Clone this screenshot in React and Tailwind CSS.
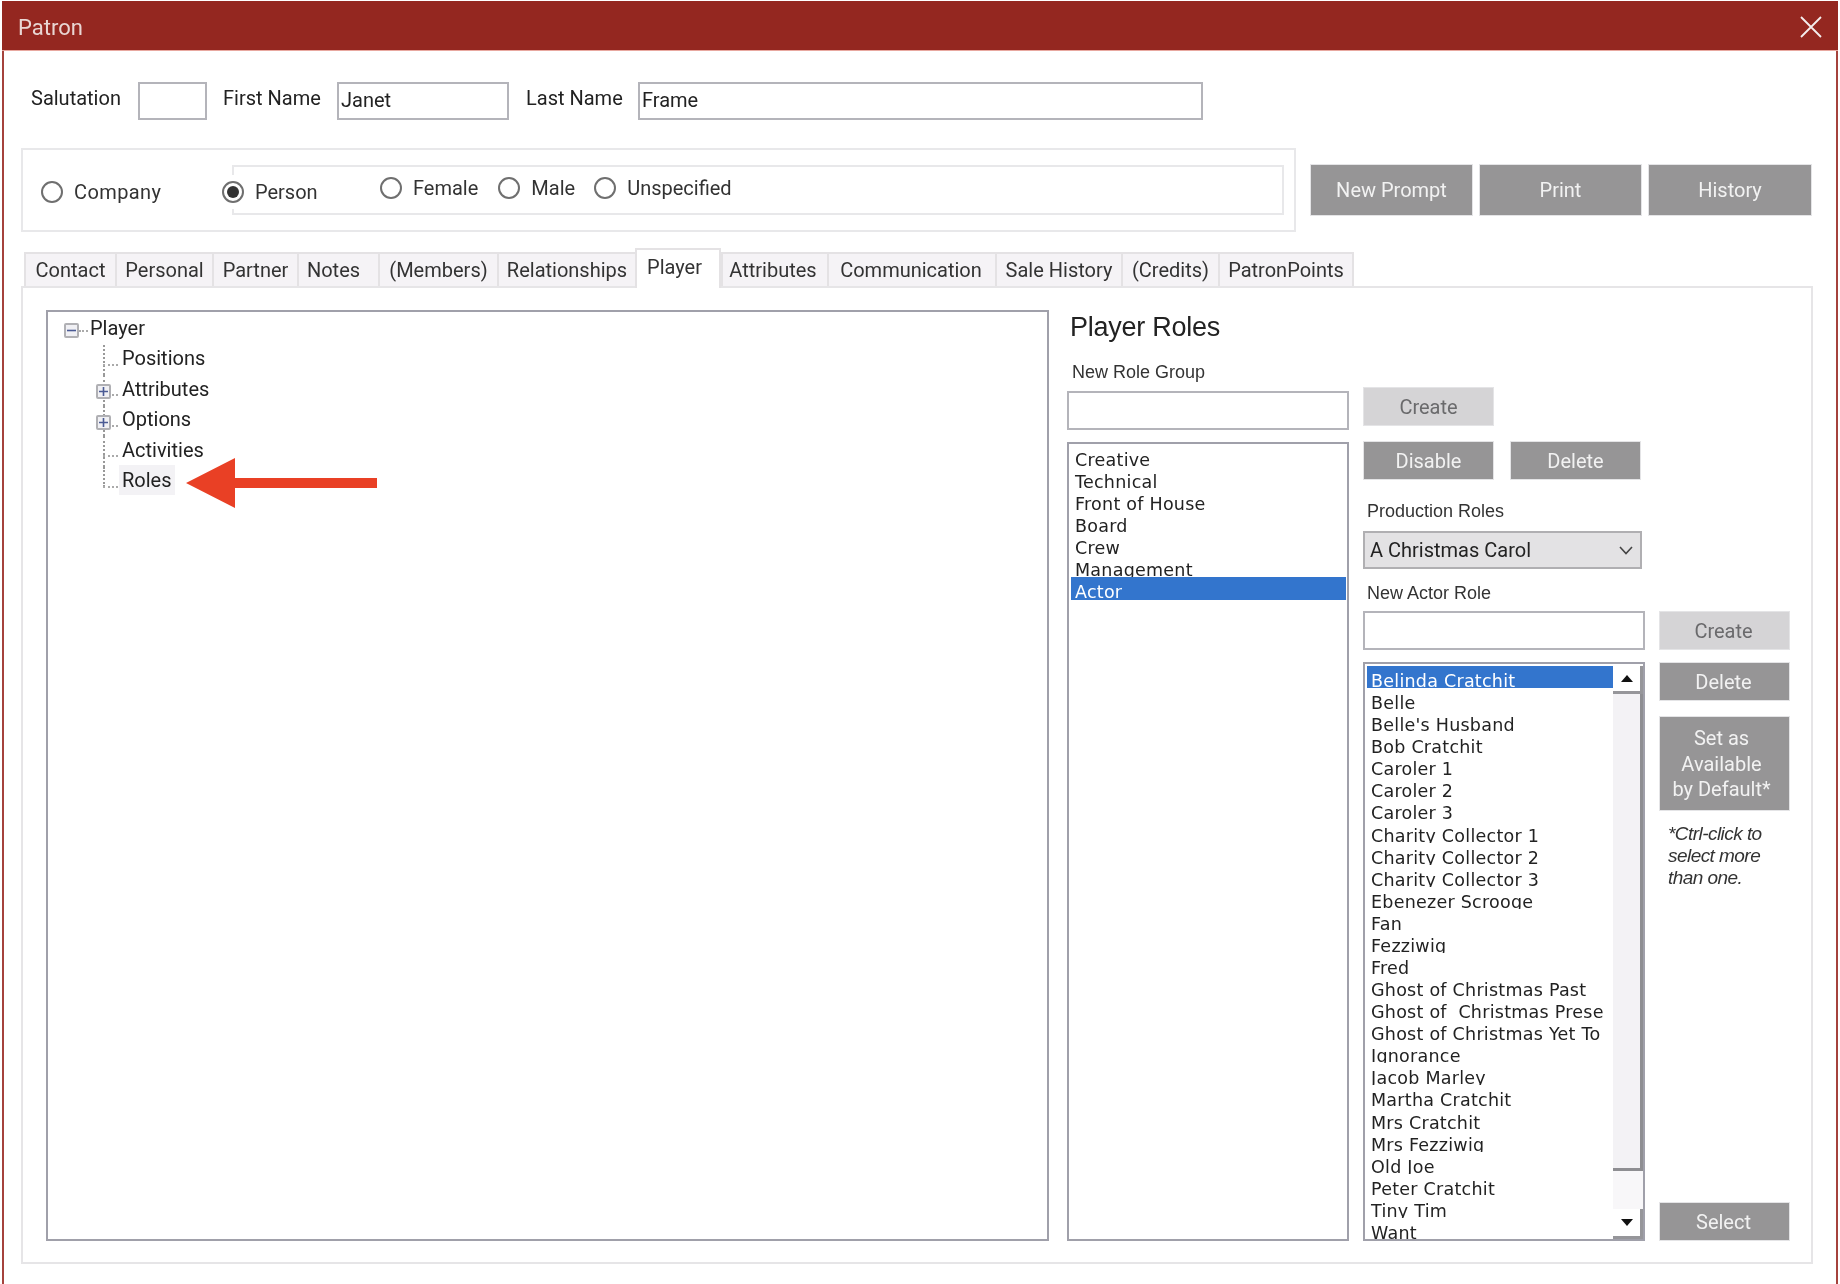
const FONT = "font-['Roboto',sans-serif]";
const LIST = "font-['DejaVu_Sans',sans-serif]";

function Btn({ className = "", children, light }) {
  return (
    <div className={`flex items-center justify-center border border-[#e4e4e6] text-[20px] ${light ? "bg-[#d5d4d6] text-[#6a6a6c]" : "bg-[#969596] text-[#f2f2f2]"} ${className}`}>
      {children}
    </div>
  );
}

function Input({ className = "", value }) {
  return (
    <div className={`flex items-center border-2 border-[#b4b4ba] bg-white pb-[2px] pl-[2px] text-[20px] text-[#222] ${className}`}>
      {value}
    </div>
  );
}

function Radio({ checked, className = "", label }) {
  return (
    <div className={`flex items-center gap-[11px] text-[20px] text-[#333] ${className}`}>
      <span className="flex h-[22px] w-[22px] items-center justify-center rounded-full border-2 border-[#6f6f6f] bg-white">
        {checked && <span className="h-[12px] w-[12px] rounded-full bg-[#333]" />}
      </span>
      <span>{label}</span>
    </div>
  );
}

const TABS = [
  ["Contact", 91, 0],
  ["Personal", 97, 0],
  ["Partner", 85, 0],
  ["Notes", 81, 10],
  ["(Members)", 119, 0],
  ["Relationships", 138, 0],
  ["Player", 86, 7],
  ["Attributes", 106, 4],
  ["Communication", 168, 2],
  ["Sale History", 126, 0],
  ["(Credits)", 97, 0],
  ["PatronPoints", 136, 0],
];

function Tabs() {
  return (
    <div className="ml-[20px] mt-[16px] flex h-[38px] items-end">
      {TABS.map(([t, w, pr]) =>
        t === "Player" ? (
          <div key={t} style={{ width: w, paddingRight: pr }} className="z-10 -mb-[2px] flex h-[40px] items-start justify-center border-2 border-b-0 border-[#e4e2e4] bg-white pt-[2px] text-[20px] text-[#333]">
            {t}
          </div>
        ) : (
          <div key={t} style={{ width: w, paddingRight: pr }} className="flex h-[34px] items-center justify-center border-2 border-b-0 border-r-0 border-[#e4e2e4] bg-[#f5f3f6] text-[20px] text-[#333] last:border-r-2">
            {t}
          </div>
        )
      )}
    </div>
  );
}

function Expander({ minus, className = "" }) {
  return (
    <span className={`flex h-[15px] w-[15px] items-center justify-center rounded-[2px] border-2 border-[#b0b0b4] bg-[#f0f0f4] ${className}`}>
      <svg width="9" height="9" viewBox="0 0 9 9">
        <path d={minus ? "M0 4.5H9" : "M0 4.5H9M4.5 0V9"} stroke="#4a5a94" strokeWidth="1.6" />
      </svg>
    </span>
  );
}

function TreeRow({ label, expander, highlight, last }) {
  return (
    <div className="relative flex h-[30.5px] items-center pl-[71px]">
      <span className={`absolute left-[55px] top-0 w-0 border-l-2 border-dotted border-[#999] ${last ? "h-[20px]" : "h-full"}`} />
      <span className="absolute left-[55px] top-[19px] w-[15px] border-t-2 border-dotted border-[#aaa]" />
      {expander && <Expander className="absolute left-[48px] top-[9px]" />}
      <span className={`-mt-[3px] flex h-[30px] items-center px-[3px] text-[20px] text-[#222] ${highlight ? "bg-[#f3f2f5]" : ""}`}>{label}</span>
    </div>
  );
}

function Tree() {
  return (
    <div className="relative h-[931px] w-[1003px] border-2 border-[#a0a0aa] bg-white pt-[2px]">
      <div className="relative flex h-[30.5px] items-center pl-[16px]">
        <Expander minus className="mt-[3px]" />
        <span className="mt-[3px] w-[9px] border-t-2 border-dotted border-[#aaa]" />
        <span className="-mt-[3px] ml-[2px] text-[20px] text-[#222]">Player</span>
      </div>
      <TreeRow label="Positions" />
      <TreeRow label="Attributes" expander />
      <TreeRow label="Options" expander />
      <TreeRow label="Activities" />
      <TreeRow label="Roles" highlight last />
      <svg className="absolute left-[138px] top-[146px]" width="194" height="52" viewBox="0 0 194 52">
        <path d="M0 25 L49 0 V20 H191 V30 H49 V50 Z" fill="#e94025" />
      </svg>
    </div>
  );
}

const GROUPS = ["Creative", "Technical", "Front of House", "Board", "Crew", "Management", "Actor"];
const ROLES = [
  "Belinda Cratchit", "Belle", "Belle's Husband", "Bob Cratchit", "Caroler 1", "Caroler 2", "Caroler 3",
  "Charity Collector 1", "Charity Collector 2", "Charity Collector 3", "Ebenezer Scrooge", "Fan", "Fezziwig",
  "Fred", "Ghost of Christmas Past", "Ghost of  Christmas Prese", "Ghost of Christmas Yet To", "Ignorance",
  "Jacob Marley", "Martha Cratchit", "Mrs Cratchit", "Mrs Fezziwig", "Old Joe", "Peter Cratchit", "Tiny Tim", "Want",
];

function ListRow({ label, selected }) {
  return (
    <div className={`h-[22.08px] shrink-0 overflow-hidden whitespace-pre pl-[4px] text-[17.5px] leading-[30px] tracking-[0.25px] ${LIST} ${selected ? "bg-[#3375cd] text-white" : "text-[#222]"}`}>
      {label}
    </div>
  );
}

function Scrollbar() {
  return (
    <div className="flex w-[30px] shrink-0 flex-col bg-white pt-[2px]">
      <div className="flex h-[28px] shrink-0 items-center justify-center border-b-[3px] border-r-[3px] border-[#96969a] bg-white">
        <svg width="12" height="7" viewBox="0 0 12 7"><path d="M6 0L12 7H0Z" fill="#111" /></svg>
      </div>
      <div className="h-[477px] shrink-0 border-b-[3px] border-r-[3px] border-[#8e8e92] bg-[#f3f2f5]" />
      <div className="flex-1 bg-[#f8f7f9]" />
      <div className="flex h-[30px] shrink-0 items-center justify-center border-b-[3px] border-r-[3px] border-[#96969a] bg-white">
        <svg width="12" height="7" viewBox="0 0 12 7"><path d="M6 7L12 0H0Z" fill="#111" /></svg>
      </div>
    </div>
  );
}

function RightPane() {
  return (
    <div className="ml-[18px] flex h-[931px] w-[724px]">
      <div className="flex w-[282px] shrink-0 flex-col">
        <div className="flex h-[34px] items-center pl-[3px] font-['Liberation_Sans',sans-serif] text-[27px] tracking-[-0.25px] text-[#222]">Player Roles</div>
        <div className="mt-[15px] flex h-[26px] items-center pl-[5px] font-['Liberation_Sans',sans-serif] text-[18px] text-[#333]">New Role Group</div>
        <Input className="mt-[6px] h-[39px]" />
        <div className="mt-[12px] flex min-h-0 flex-1 flex-col overflow-hidden border-2 border-[#a0a0aa] bg-white pl-[2px] pr-[1px] pt-[1px]">
          {GROUPS.map((g, i) => (
            <ListRow key={g} label={g} selected={i === 6} />
          ))}
        </div>
      </div>
      <div className="ml-[14px] flex min-w-0 flex-1 flex-col pt-[77px]">
        <Btn light className="h-[39px] w-[131px]">Create</Btn>
        <div className="mt-[15px] flex gap-[16px]">
          <Btn className="h-[39px] w-[131px]">Disable</Btn>
          <Btn className="h-[39px] w-[131px]">Delete</Btn>
        </div>
        <div className="mt-[20px] flex h-[22px] items-center pl-[4px] font-['Liberation_Sans',sans-serif] text-[18px] text-[#333]">Production Roles</div>
        <div className="mt-[9px] flex h-[38px] w-[279px] items-center justify-between border-2 border-[#b0afb2] bg-[#e3e2e4] pl-[5px] pr-[7px] text-[20px] text-[#222]">
          <span>A Christmas Carol</span>
          <svg width="14" height="9" viewBox="0 0 14 9"><path d="M1 1L7 7.5L13 1" fill="none" stroke="#444" strokeWidth="1.6" /></svg>
        </div>
        <div className="mt-[13px] flex h-[22px] items-center pl-[4px] font-['Liberation_Sans',sans-serif] text-[18px] text-[#333]">New Actor Role</div>
        <div className="mt-[7px] flex min-h-0 flex-1 gap-[14px]">
          <div className="flex w-[282px] shrink-0 flex-col">
            <Input className="h-[39px]" />
            <div className="mt-[12px] flex min-h-0 flex-1 overflow-hidden border-2 border-[#a0a0aa] bg-white">
              <div className="flex min-w-0 flex-1 flex-col overflow-hidden pl-[2px] pt-[2px]">
                {ROLES.map((r, i) => (
                  <ListRow key={r} label={r} selected={i === 0} />
                ))}
              </div>
              <Scrollbar />
            </div>
          </div>
          <div className="flex w-[131px] shrink-0 flex-col">
            <Btn light className="h-[39px] pr-[2px]">Create</Btn>
            <Btn className="mt-[12px] h-[39px] pr-[2px]">Delete</Btn>
            <Btn className="mt-[15px] h-[95px] pb-0 pl-1 pr-[10px] pt-[2px] text-center leading-[25.5px]">Set as<br />Available<br />by Default*</Btn>
            <div className="ml-[9px] mt-[12px] font-['Liberation_Sans',sans-serif] text-[19px] italic leading-[22px] tracking-[-0.55px] text-[#333]">
              *Ctrl-click to<br />select more<br />than one.
            </div>
            <Btn className="mt-auto h-[39px] pr-[2px]">Select</Btn>
          </div>
        </div>
      </div>
    </div>
  );
}

export default function App() {
  return (
    <div className={`h-[1284px] w-[1840px] overflow-hidden bg-white pt-px blur-[0.5px] ${FONT}`}>
      <div className="ml-[2px] h-[1283px] w-[1836px] border-x-2 border-[#a5423c] bg-white">
        <div className="-mx-[2px] flex h-[50px] items-center justify-between border-b border-[#e8a8a0] bg-[#942720] pl-[16px] pr-[16px] text-[22px] text-[#e9d6d3]">
          <span className="mt-[3px]">Patron</span>
          <svg className="mt-[2px]" width="22" height="22" viewBox="0 0 22 22"><path d="M1 1L21 21M21 1L1 21" stroke="#f5eeee" strokeWidth="1.8" /></svg>
        </div>

        <div className="mt-[31px] flex h-[38px] items-center text-[20px] text-[#222]">
          <span className="-mt-[6px] ml-[27px] w-[107px]">Salutation</span>
          <Input className="h-[38px] w-[69px]" />
          <span className="-mt-[6px] ml-[16px] w-[114px]">First Name</span>
          <Input className="h-[38px] w-[172px]" value="Janet" />
          <span className="-mt-[6px] ml-[17px] w-[112px]">Last Name</span>
          <Input className="h-[38px] w-[565px]" value="Frame" />
        </div>

        <div className="mt-[28px] flex items-center">
          <div className="ml-[17px] flex h-[84px] w-[1275px] items-center border-2 border-[#e8e8ea] pl-[18px] pt-[3px]">
            <Radio label="Company" className="w-[191px] tracking-[0.4px]" />
            <div className="relative -mt-[3px] flex h-[50px] flex-1 items-center border-2 border-[#e8e8ea] pb-[4px]">
              <Radio checked label="Person" className="absolute -left-[12px] top-[8px] bg-white py-[2px] pr-[6px]" />
              <Radio label="Female" className="ml-[146px]" />
              <Radio label="Male" className="ml-[20px]" />
              <Radio label="Unspecified" className="ml-[19px]" />
            </div>
            <div className="w-[10px]" />
          </div>
          <div className="ml-[14px] flex gap-[6px]">
            <Btn className="h-[52px] w-[163px]">New Prompt</Btn>
            <Btn className="h-[52px] w-[163px]">Print</Btn>
            <Btn className="h-[52px] w-[164px]">History</Btn>
          </div>
        </div>

        <Tabs />

        <div className="ml-[17px] flex h-[978px] w-[1792px] border-2 border-t-2 border-[#e6e5e7] pl-[23px] pt-[22px]">
          <Tree />
          <RightPane />
        </div>
      </div>
    </div>
  );
}
